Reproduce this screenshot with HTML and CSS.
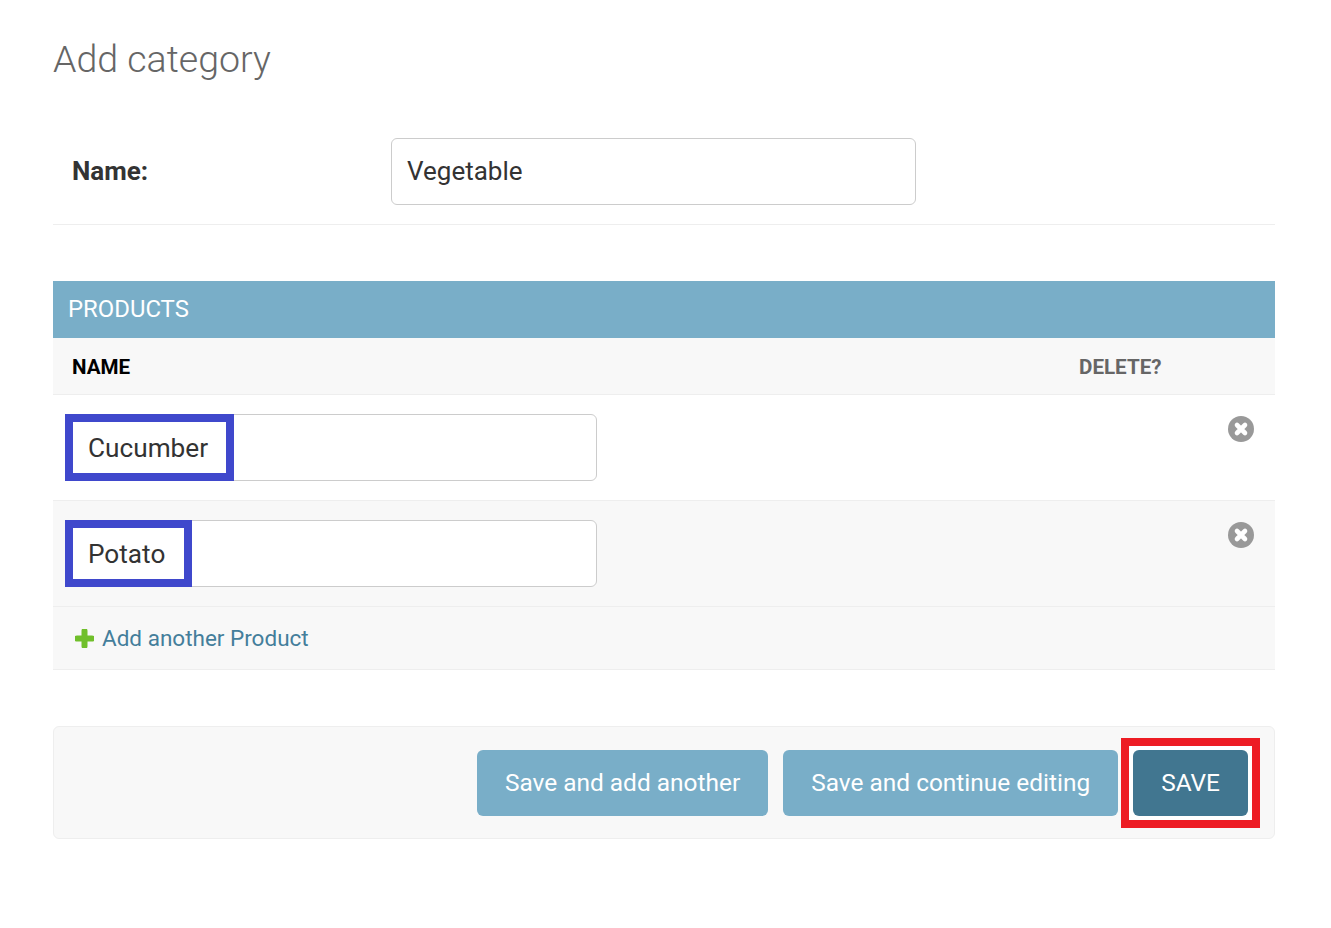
FILE: index.html
```html
<!DOCTYPE html>
<html lang="en">
<head>
<meta charset="utf-8">
<title>Add category</title>
<link rel="stylesheet" href="styles.css">
</head>
<body>
<main class="content">
  <h1 class="title">Add category</h1>
  <div class="form-row">
    <label class="form-label">Name:</label>
    <div class="input name-input">Vegetable</div>
  </div>
  <section class="inline">
    <h2 class="inline-head">Products</h2>
    <div class="col-head">
      <span class="col-name">Name</span>
      <span class="col-delete">Delete?</span>
    </div>
    <div class="item">
      <div class="input item-input"><span class="mark">Cucumber</span></div>
      <svg class="del" viewBox="0 0 26 26"><circle cx="13" cy="13" r="13" fill="#999"/><path d="M9 9l8 8M17 9l-8 8" stroke="#fff" stroke-width="4.6" stroke-linecap="round"/></svg>
    </div>
    <div class="item alt">
      <div class="input item-input"><span class="mark">Potato</span></div>
      <svg class="del" viewBox="0 0 26 26"><circle cx="13" cy="13" r="13" fill="#999"/><path d="M9 9l8 8M17 9l-8 8" stroke="#fff" stroke-width="4.6" stroke-linecap="round"/></svg>
    </div>
    <div class="add-row">
      <svg class="plus" viewBox="0 0 19 19"><path d="M9.5 2v15M2 9.5h15" stroke="#70bf2b" stroke-width="6" stroke-linecap="round"/></svg>
      <a class="add-link">Add another Product</a>
    </div>
  </section>
  <div class="submit-row">
    <a class="btn">Save and add another</a>
    <a class="btn">Save and continue editing</a>
    <div class="save-frame"><a class="btn btn-save">SAVE</a></div>
  </div>
</main>
</body>
</html>
```
FILE: styles.css
```css
* { box-sizing: border-box; }
html, body { margin: 0; background: #fff; }
body { font-family: Roboto, "Liberation Sans", sans-serif; color: #333; height: 928px; overflow: hidden; }
.content { padding: 0 56px 0 53px; }
.title { margin: 0; padding-top: 37px; height: 138px; font-size: 37.5px; line-height: 44px; font-weight: 300; color: #666; }
.form-row { display: flex; align-items: flex-start; height: 87px; border-bottom: 1px solid #eee; padding-left: 19px; }
.form-label { width: 319px; font-size: 26px; font-weight: 700; line-height: 67px; color: #333; }
.input { background: #fff; border: 1px solid #ccc; border-radius: 6px; height: 67px; font-size: 26px; color: #333; }
.name-input { width: 525px; padding-left: 15px; line-height: 65px; }
.inline { margin-top: 56px; }
.inline-head { margin: 0; height: 57px; background: #79aec8; color: #fff; font-size: 23.9px; font-weight: 400; line-height: 57px; padding-left: 15px; text-transform: uppercase; }
.col-head { display: flex; align-items: center; height: 57px; padding-top: 2px; background: #f8f8f8; border-bottom: 1px solid #eee; font-size: 20.6px; font-weight: 700; text-transform: uppercase; padding-left: 19px; }
.col-name { flex: 0 0 1007px; color: #000; }
.col-delete { color: #666; }
.item { position: relative; height: 106px; border-bottom: 1px solid #eee; padding: 19px 0 0 12px; }
.item.alt { background: #f8f8f8; }
.item-input { width: 532px; display: flex; align-items: stretch; }
.mark { display: block; border: 8px solid #3f48cc; margin: -1px 0 -1px -1px; padding: 1px 18.2px 0 15px; font-size: 26.2px; line-height: 51px; background: #fff; }
.del { position: absolute; right: 21px; top: 21px; width: 26px; height: 26px; }
.add-row { display: flex; align-items: center; height: 63px; background: #f8f8f8; border-bottom: 1px solid #eee; padding-left: 21.5px; }
.plus { width: 19px; height: 19px; margin-right: 8.5px; }
.add-link { font-size: 22.5px; color: #447e9b; }
.submit-row { display: flex; justify-content: flex-end; align-items: center; gap: 15px; margin-top: 56px; height: 113px; background: #f8f8f8; border: 1px solid #eee; border-radius: 6px; padding-right: 14px; }
.btn { display: block; height: 66px; line-height: 66px; padding: 0 28px; background: #79aec8; color: #fff; font-size: 24.45px; border-radius: 6px; }
.save-frame { border: 8px solid #ed1c24; background: #fff; padding: 4px; margin-left: -12px; }
.btn-save { background: #417690; }
```
